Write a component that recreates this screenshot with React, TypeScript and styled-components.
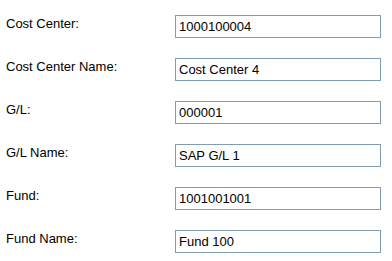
import React from "react";
import styled, { createGlobalStyle } from "styled-components";

const GlobalStyle = createGlobalStyle`
  body {
    margin: 0;
    background: #ffffff;
    font-family: "Liberation Sans", Arial, sans-serif;
  }
`;

const Form = styled.form`
  display: flex;
  flex-direction: column;
  gap: 20px;
  padding: 15px 0 0 6px;
`;

const Row = styled.div`
  display: grid;
  grid-template-columns: 169px 206px;
  align-items: start;
`;

const Label = styled.label`
  margin-top: 1px;
  font-size: 13px;
  line-height: 15px;
  color: #000;
`;

const Field = styled.input`
  box-sizing: border-box;
  width: 206px;
  height: 23px;
  margin: 0;
  padding: 3px 3px;
  border: 1px solid #7f9db9;
  border-radius: 0;
  background: #fff;
  font-family: "Liberation Sans", Arial, sans-serif;
  font-size: 13px;
  line-height: 15px;
  color: #000;
  outline: none;
`;

const fields = [
  { id: "costCenter", label: "Cost Center:", value: "1000100004" },
  { id: "costCenterName", label: "Cost Center Name:", value: "Cost Center 4" },
  { id: "gl", label: "G/L:", value: "000001" },
  { id: "glName", label: "G/L Name:", value: "SAP G/L 1" },
  { id: "fund", label: "Fund:", value: "1001001001" },
  { id: "fundName", label: "Fund Name:", value: "Fund 100" },
];

const App = (): JSX.Element => (
  <>
    <GlobalStyle />
    <Form>
      {fields.map((f) => (
        <Row key={f.id}>
          <Label htmlFor={f.id}>{f.label}</Label>
          <Field id={f.id} type="text" defaultValue={f.value} />
        </Row>
      ))}
    </Form>
  </>
);

export default App;
